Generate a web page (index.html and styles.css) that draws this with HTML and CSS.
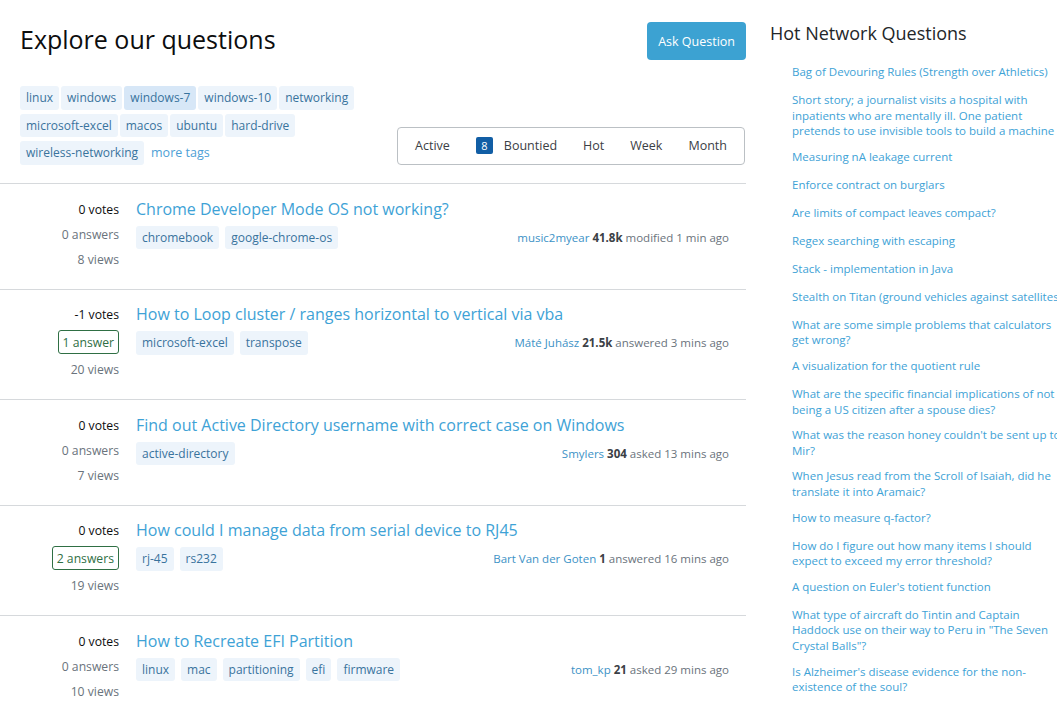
FILE: index.html
```html
<!DOCTYPE html>
<html lang="en">
<head>
<meta charset="utf-8">
<title>Explore our questions</title>
<link rel="stylesheet" href="styles.css">
</head>
<body>
<div class="page">
  <main class="main">
    <div class="head">
      <h1 class="head-title">Explore our questions</h1>
      <a class="btn-ask" href="#">Ask Question</a>
    </div>
    <div class="toolbar">
      <div class="tag-cloud">
        <a class="tag" href="#">linux</a>
        <a class="tag" href="#">windows</a>
        <a class="tag tag-active" href="#">windows-7</a>
        <a class="tag" href="#">windows-10</a>
        <a class="tag" href="#">networking</a>
        <a class="tag" href="#">microsoft-excel</a>
        <a class="tag" href="#">macos</a>
        <a class="tag" href="#">ubuntu</a>
        <a class="tag" href="#">hard-drive</a>
        <a class="tag" href="#">wireless-networking</a>
        <a class="more-tags" href="#">more tags</a>
      </div>
      <div class="filters">
        <a class="filter" href="#">Active</a>
        <a class="filter" href="#"><span class="badge">8</span>Bountied</a>
        <a class="filter" href="#">Hot</a>
        <a class="filter" href="#">Week</a>
        <a class="filter" href="#">Month</a>
      </div>
    </div>

    <div class="questions">
      <div class="q">
        <div class="stats">
          <div class="votes">0 votes</div>
          <div class="answers">0 answers</div>
          <div class="views">8 views</div>
        </div>
        <div class="summary">
          <a class="q-title" href="#">Chrome Developer Mode OS not working?</a>
          <div class="q-foot">
            <div class="q-tags"><a class="tag" href="#">chromebook</a><a class="tag" href="#">google-chrome-os</a></div>
            <div class="meta"><a class="user" href="#">music2myear</a> <b class="rep">41.8k</b> modified 1 min ago</div>
          </div>
        </div>
      </div>

      <div class="q">
        <div class="stats">
          <div class="votes">-1 votes</div>
          <div class="answers answered">1 answer</div>
          <div class="views">20 views</div>
        </div>
        <div class="summary">
          <a class="q-title" href="#">How to Loop cluster / ranges horizontal to vertical via vba</a>
          <div class="q-foot">
            <div class="q-tags"><a class="tag" href="#">microsoft-excel</a><a class="tag" href="#">transpose</a></div>
            <div class="meta"><a class="user" href="#">Máté Juhász</a> <b class="rep">21.5k</b> answered 3 mins ago</div>
          </div>
        </div>
      </div>

      <div class="q">
        <div class="stats">
          <div class="votes">0 votes</div>
          <div class="answers">0 answers</div>
          <div class="views">7 views</div>
        </div>
        <div class="summary">
          <a class="q-title" href="#">Find out Active Directory username with correct case on Windows</a>
          <div class="q-foot">
            <div class="q-tags"><a class="tag" href="#">active-directory</a></div>
            <div class="meta"><a class="user" href="#">Smylers</a> <b class="rep">304</b> asked 13 mins ago</div>
          </div>
        </div>
      </div>

      <div class="q">
        <div class="stats">
          <div class="votes">0 votes</div>
          <div class="answers answered">2 answers</div>
          <div class="views">19 views</div>
        </div>
        <div class="summary">
          <a class="q-title" href="#">How could I manage data from serial device to RJ45</a>
          <div class="q-foot">
            <div class="q-tags"><a class="tag" href="#">rj-45</a><a class="tag" href="#">rs232</a></div>
            <div class="meta"><a class="user" href="#">Bart Van der Goten</a> <b class="rep">1</b> answered 16 mins ago</div>
          </div>
        </div>
      </div>

      <div class="q">
        <div class="stats">
          <div class="votes">0 votes</div>
          <div class="answers">0 answers</div>
          <div class="views">10 views</div>
        </div>
        <div class="summary">
          <a class="q-title" href="#">How to Recreate EFI Partition</a>
          <div class="q-foot">
            <div class="q-tags"><a class="tag" href="#">linux</a><a class="tag" href="#">mac</a><a class="tag" href="#">partitioning</a><a class="tag" href="#">efi</a><a class="tag" href="#">firmware</a></div>
            <div class="meta"><a class="user" href="#">tom_kp</a> <b class="rep">21</b> asked 29 mins ago</div>
          </div>
        </div>
      </div>
    </div>
  </main>

  <aside class="side">
    <h2 class="side-title">Hot Network Questions</h2>
    <ul class="hot-list">
      <li><a href="#">Bag of Devouring Rules (Strength over Athletics)</a></li>
      <li><a href="#">Short story; a journalist visits a hospital with inpatients who are mentally ill. One patient pretends to use invisible tools to build a machine</a></li>
      <li><a href="#">Measuring nA leakage current</a></li>
      <li><a href="#">Enforce contract on burglars</a></li>
      <li><a href="#">Are limits of compact leaves compact?</a></li>
      <li><a href="#">Regex searching with escaping</a></li>
      <li><a href="#">Stack - implementation in Java</a></li>
      <li class="nowrap"><a href="#">Stealth on Titan (ground vehicles against satellites)</a></li>
      <li><a href="#">What are some simple problems that calculators get wrong?</a></li>
      <li><a href="#">A visualization for the quotient rule</a></li>
      <li><a href="#">What are the specific financial implications of not being a US citizen after a spouse dies?</a></li>
      <li><a href="#">What was the reason honey couldn't be sent up to Mir?</a></li>
      <li><a href="#">When Jesus read from the Scroll of Isaiah, did he translate it into Aramaic?</a></li>
      <li><a href="#">How to measure q-factor?</a></li>
      <li><a href="#">How do I figure out how many items I should expect to exceed my error threshold?</a></li>
      <li><a href="#">A question on Euler's totient function</a></li>
      <li><a href="#">What type of aircraft do Tintin and Captain Haddock use on their way to Peru in "The Seven Crystal Balls"?</a></li>
      <li><a href="#">Is Alzheimer's disease evidence for the non-existence of the soul?</a></li>
    </ul>
  </aside>
</div>
</body>
</html>
```

FILE: styles.css
```css
html, body {
  margin: 0;
  padding: 0;
  overflow: hidden;
  background: #ffffff;
}

body {
  font-family: "Open Sans", "Noto Sans", "Liberation Sans", sans-serif;
  color: #232629;
  font-size: 12px;
}

a {
  text-decoration: none;
}

.page {
  display: flex;
  gap: 24px;
  width: 1100px;
}

.main {
  width: 746px;
  flex: none;
}

.head {
  display: flex;
  justify-content: space-between;
  align-items: center;
  padding: 22px 0 0 20px;
}

.head-title {
  margin: 0;
  padding-bottom: 3px;
  font-size: 25px;
  font-weight: 400;
  line-height: 35px;
  color: #0c0d0e;
}

.btn-ask {
  display: flex;
  align-items: center;
  height: 38px;
  box-sizing: border-box;
  padding: 0 11px;
  background: #3ca2d2;
  color: #ffffff;
  border-radius: 4px;
  font-size: 12.5px;
}

.toolbar {
  display: flex;
  justify-content: space-between;
  align-items: flex-end;
  padding: 26px 1px 0 20px;
}

.tag-cloud {
  display: flex;
  flex-wrap: wrap;
  align-items: center;
  gap: 4px 2px;
  width: 370px;
}

.tag {
  display: inline-flex;
  align-items: center;
  height: 23.5px;
  padding: 0 6px;
  box-sizing: border-box;
  border-radius: 3px;
  background: #edf4fb;
  color: #39739d;
  font-size: 12px;
  white-space: nowrap;
}

.tag-active {
  background: #d7e7f7;
}

.more-tags {
  color: #4d9fd6;
  font-size: 12.5px;
  margin-left: 5px;
}

.filters {
  display: flex;
  align-items: center;
  height: 38px;
  box-sizing: border-box;
  padding: 0 4px;
  border: 1px solid #bbc0c4;
  border-radius: 4px;
}

.filter {
  display: flex;
  align-items: center;
  padding: 0 13px;
  color: #3b4045;
  font-size: 12.5px;
}

.badge {
  display: inline-flex;
  align-items: center;
  justify-content: center;
  width: 17px;
  height: 17px;
  margin-right: 11px;
  border-radius: 2px;
  background: #115ea5;
  color: #ffffff;
  font-size: 11px;
}

.questions {
  margin-top: 18.5px;
}

.q {
  display: flex;
  gap: 17px;
  padding: 15.5px 17px 20px 0;
  border-top: 1px solid #d6d9dc;
}

.stats {
  width: 119px;
  flex: none;
  display: flex;
  flex-direction: column;
  align-items: flex-end;
  gap: 6px;
  font-size: 12.2px;
  line-height: 19px;
}

.votes {
  color: #0c0d0e;
}

.answers,
.views {
  color: #6a737c;
}

.answered {
  border: 1px solid #2f6f44;
  border-radius: 3px;
  padding: 1.5px 4px;
  color: #2f6f44;
}

.summary {
  flex: 1;
  min-width: 0;
}

.q-title {
  display: block;
  font-size: 16px;
  line-height: 19px;
  color: #3ea2d6;
}

.q-foot {
  display: flex;
  justify-content: space-between;
  align-items: center;
  margin-top: 7px;
}

.q-tags {
  display: flex;
  gap: 6px;
}

.meta {
  font-size: 11.5px;
  color: #6a737c;
  white-space: nowrap;
}

.user {
  color: #3c92c6;
}

.rep {
  color: #3b4045;
  font-weight: 700;
}

.side {
  flex: none;
  width: 300px;
}

.side-title {
  margin: 21px 0 0 0;
  font-size: 18px;
  font-weight: 400;
  line-height: 25px;
  color: #232629;
}

.hot-list {
  list-style: none;
  margin: 18px 0 0 0;
  padding: 0 0 0 22px;
  width: 272px;
}

.hot-list li {
  font-size: 11.5px;
  line-height: 15.6px;
  min-height: 18px;
  margin-bottom: 10px;
}

.hot-list li.nowrap {
  white-space: nowrap;
}

.hot-list a {
  color: #3ea2d6;
}
```
